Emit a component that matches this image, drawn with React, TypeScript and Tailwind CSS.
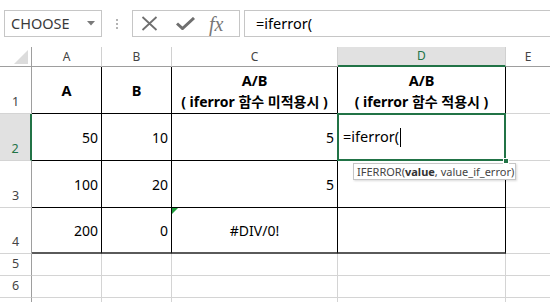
import React from "react";

const FONT = '"Noto Sans", "Noto Sans CJK KR", sans-serif';

function HeaderCell({ w, label, selected, last }: { w: string; label: string; selected?: boolean; last?: boolean }) {
  return (
    <div
      className={`${w} h-full flex items-center justify-center text-[12px] ${
        selected
          ? "bg-[#e1e1e1] text-[#217346] border-b-2 border-b-[#217346]"
          : "text-[#444] border-b border-b-[#9e9e9e]"
      } ${last ? "" : "border-r border-r-[#d0d0d0]"}`}
    >
      {label}
    </div>
  );
}

function RowHead({ n, h, selected }: { n: string; h: string; selected?: boolean }) {
  return (
    <div
      className={`w-[32px] ${h} flex items-end justify-center pb-[1px] text-[12.5px] border-b ${
        selected
          ? "bg-[#e1e1e1] text-[#217346] border-r-2 border-r-[#217346] border-b-[#d4d4d4]"
          : "text-[#444] border-r border-r-[#9e9e9e] border-b-[#d4d4d4]"
      }`}
    >
      {n}
    </div>
  );
}

export default function App() {
  return (
    <div
      className="w-[550px] h-[302px] overflow-hidden bg-white relative"
      style={{ fontFamily: FONT }}
    >
      {/* formula bar area */}
      <div className="h-[47px] flex items-start pt-[10px]">
        <div className="ml-[4px] w-[98px] h-[27px] border border-[#c6c6c6] flex items-center justify-between pl-[6px] pr-[6px]">
          <span className="text-[14.5px] text-[#3a3a3a] leading-none">CHOOSE</span>
          <svg width="8" height="5" viewBox="0 0 8 5">
            <path d="M0 0 L8 0 L4 4.5 Z" fill="#7a7a7a" />
          </svg>
        </div>
        <div className="w-[30px] h-[27px] flex flex-col items-center justify-center gap-[2px]">
          <span className="w-[2px] h-[2px] bg-[#b4b4b4]" />
          <span className="w-[2px] h-[2px] bg-[#b4b4b4]" />
          <span className="w-[2px] h-[2px] bg-[#b4b4b4]" />
        </div>
        <div className="w-[108px] h-[27px] border border-[#c6c6c6] flex items-center">
          <svg className="ml-[8px]" width="17" height="15" viewBox="0 0 17 15">
            <path d="M1.5 1 L15.5 14 M15.5 1 L1.5 14" stroke="#6f6f6f" strokeWidth="1.8" />
          </svg>
          <svg className="ml-[18px]" width="19" height="13" viewBox="0 0 19 13">
            <path d="M1 6.5 L6.5 11.5 L18 1" stroke="#6f6f6f" strokeWidth="3" fill="none" />
          </svg>
          <span
            className="ml-[14px] text-[20px] italic text-[#777] leading-none"
            style={{ fontFamily: '"Liberation Serif", serif' }}
          >
            fx
          </span>
        </div>
        <div className="ml-[4px] flex-1 h-[27px] border-t border-b border-l border-[#c6c6c6] flex items-center pl-[11px]">
          <span className="text-[14.5px] text-black leading-none">=iferror(</span>
        </div>
      </div>

      {/* column headers */}
      <div className="flex h-[20px]">
        <div className="w-[32px] h-full border-r border-r-[#9e9e9e] border-b border-b-[#9e9e9e] relative">
          <svg className="absolute left-[14px] top-[3px]" width="14" height="14" viewBox="0 0 14 14">
            <path d="M14 0 L14 14 L0 14 Z" fill="#dcdcdc" />
          </svg>
        </div>
        <HeaderCell w="w-[70px]" label="A" />
        <HeaderCell w="w-[70px]" label="B" />
        <HeaderCell w="w-[166px]" label="C" />
        <HeaderCell w="w-[168px]" label="D" selected />
        <HeaderCell w="flex-1" label="E" last />
      </div>

      {/* row 1 */}
      <div className="flex h-[47px]">
        <RowHead n="1" h="h-[47px]" />
        <div className="w-[70px] border-r border-b border-black flex items-center justify-center font-bold text-[14.5px] text-black pt-[2px]">A</div>
        <div className="w-[70px] border-r border-b border-black flex items-center justify-center font-bold text-[14.5px] text-black pt-[2px]">B</div>
        <div className="w-[166px] border-r border-b border-black flex flex-col items-center justify-center font-bold text-[14px] leading-[21px] text-black pt-[1px]">
          <span className="text-[14.5px]">A/B</span>
          <span>( iferror 함수 미적용시 )</span>
        </div>
        <div className="w-[168px] border-r border-b border-black flex flex-col items-center justify-center font-bold text-[14px] leading-[21px] text-black pt-[1px]">
          <span className="text-[14.5px]">A/B</span>
          <span>( iferror 함수 적용시 )</span>
        </div>
        <div className="flex-1 border-b border-b-[#d4d4d4]" />
      </div>

      {/* row 2 */}
      <div className="flex h-[47px]">
        <RowHead n="2" h="h-[47px]" selected />
        <div className="w-[70px] border-r border-b border-black flex items-center justify-end pr-[3px] text-[14px] text-black">50</div>
        <div className="w-[70px] border-r border-b border-black flex items-center justify-end pr-[3px] text-[14px] text-black">10</div>
        <div className="w-[166px] border-r border-b border-black flex items-center justify-end pr-[3px] text-[14px] text-black">5</div>
        <div className="w-[168px] relative">
          <div className="absolute left-[-1px] top-[-1px] w-[169px] h-[48px] border-2 border-[#217346] flex items-center pl-[4px] text-[14.5px] text-black">
            <span>=iferror(</span>
            <span className="w-[1px] h-[19px] bg-black ml-[1px]" />
          </div>
          <div className="absolute right-[-3px] bottom-[-3px] w-[6px] h-[6px] bg-[#217346] border border-white z-10" />
        </div>
        <div className="flex-1 border-b border-b-[#d4d4d4]" />
      </div>

      {/* row 3 */}
      <div className="flex h-[47px]">
        <RowHead n="3" h="h-[47px]" />
        <div className="w-[70px] border-r border-b border-black flex items-center justify-end pr-[3px] text-[14px] text-black">100</div>
        <div className="w-[70px] border-r border-b border-black flex items-center justify-end pr-[3px] text-[14px] text-black">20</div>
        <div className="w-[166px] border-r border-b border-black flex items-center justify-end pr-[3px] text-[14px] text-black">5</div>
        <div className="w-[168px] border-r border-b border-black" />
        <div className="flex-1 border-b border-b-[#d4d4d4]" />
      </div>

      {/* row 4 */}
      <div className="flex h-[46px]">
        <RowHead n="4" h="h-[46px]" />
        <div className="w-[70px] border-r border-b-2 border-r-black border-b-[#5a5a5a] flex items-center justify-end pr-[3px] text-[14px] text-black">200</div>
        <div className="w-[70px] border-r border-b-2 border-r-black border-b-[#5a5a5a] flex items-center justify-end pr-[3px] text-[14px] text-black">0</div>
        <div className="w-[166px] border-r border-b-2 border-r-black border-b-[#5a5a5a] flex items-center justify-center text-[14px] text-black relative">
          <svg className="absolute left-0 top-0" width="6" height="6" viewBox="0 0 6 6">
            <path d="M0 0 L6 0 L0 6 Z" fill="#1e9b3c" />
          </svg>
          #DIV/0!
        </div>
        <div className="w-[168px] border-r border-b-2 border-r-black border-b-[#5a5a5a]" />
        <div className="flex-1 border-b border-b-[#d4d4d4]" />
      </div>

      {/* rows 5-7 */}
      {["5", "6", ""].map((n, i) => (
        <div key={i} className="flex h-[22px]">
          <RowHead n={n} h="h-[22px]" />
          <div className="w-[70px] border-r border-b border-[#d4d4d4]" />
          <div className="w-[70px] border-r border-b border-[#d4d4d4]" />
          <div className="w-[166px] border-r border-b border-[#d4d4d4]" />
          <div className="w-[168px] border-r border-b border-[#d4d4d4]" />
          <div className="flex-1 border-b border-[#d4d4d4]" />
        </div>
      ))}

      {/* tooltip */}
      <div className="absolute left-[353px] top-[163px] w-[163px] h-[17px] bg-white border border-[#c6c6c6] shadow-[1px_1px_2px_rgba(0,0,0,0.15)] flex items-center pl-[3px] text-[11px] text-[#444] leading-none whitespace-nowrap">
        IFERROR(<b className="font-bold text-[#333]">value</b>, value_if_error)
      </div>
    </div>
  );
}
